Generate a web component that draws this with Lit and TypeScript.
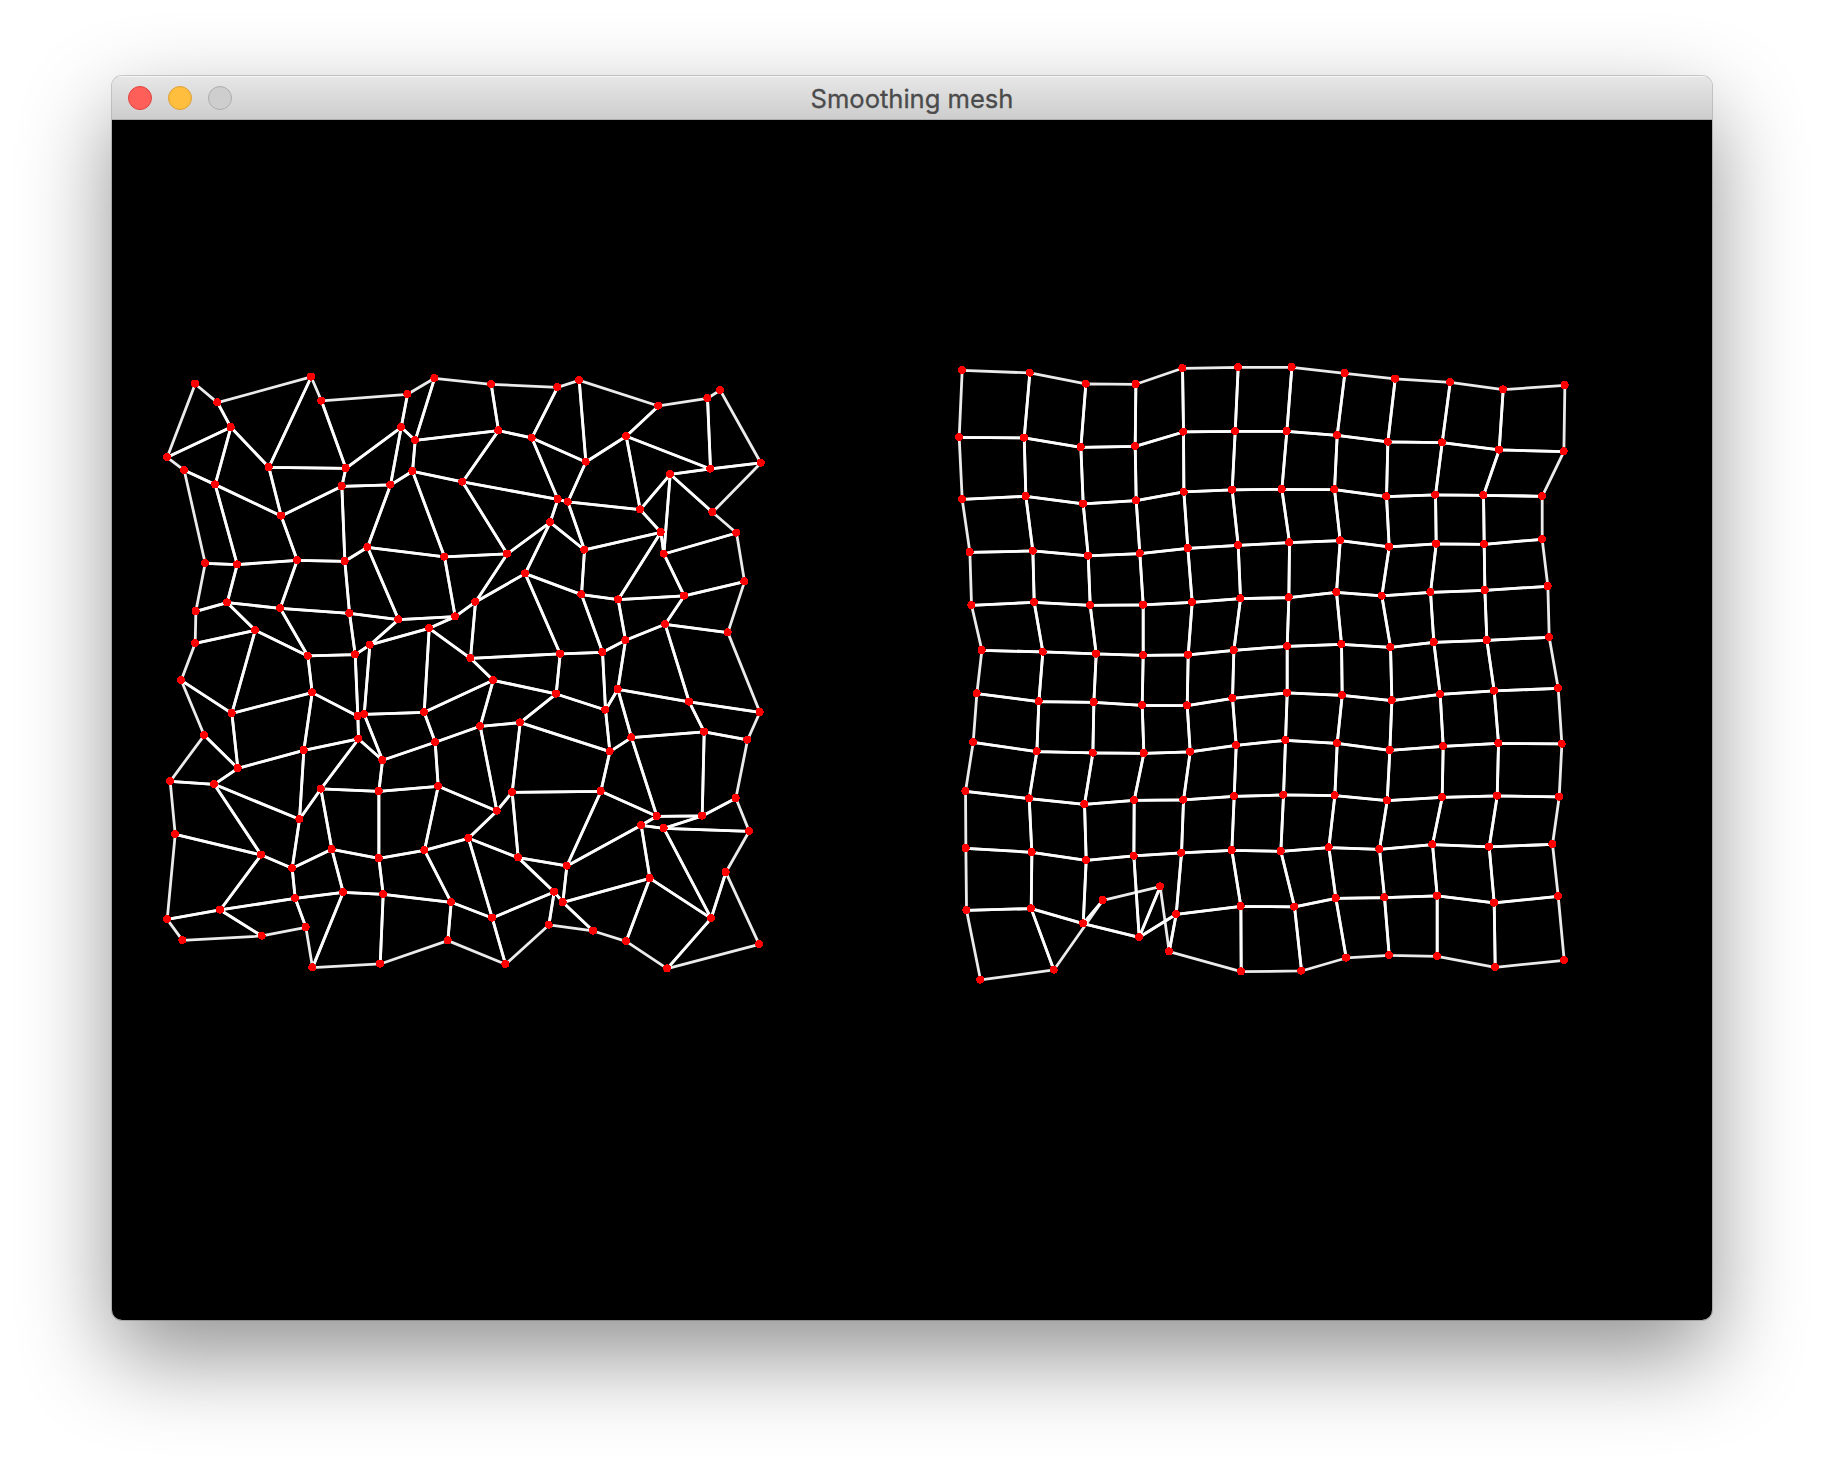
import { LitElement, html, svg, css } from "lit";
import { customElement, property } from "lit/decorators.js";

type Point = [number, number];

/** Vertex rows are stored per patch, in thirds of a pixel from the patch origin. */
interface Patch {
  origin: Point;
  rows: Point[][];
}

const UNIT = 3;
const CANVAS: Point = [112, 120];

const roughPatches: Patch[][] = [
  [
    {
      origin: [160, 370],
      rows: [
        [[105, 41], [172, 97], [453, 20], [484, 92], [742, 72], [823, 24]],
        [[21, 261], [212, 171], [326, 291], [557, 294], [723, 171], [765, 210]],
        [[72, 300], [165, 343], [363, 437], [545, 348], [691, 344], [757, 303]],
        [[135, 579], [231, 583], [411, 570], [554, 573], [622, 531], [853, 560]],
        [[107, 723], [201, 697], [360, 714], [568, 729], [715, 748], [885, 739]],
        [[105, 819], [285, 780], [443, 857], [585, 853], [629, 824], [807, 774]],
      ],
    },
    {
      origin: [460, 370],
      rows: [
        [[93, 42], [292, 51], [357, 30], [595, 107], [742, 84], [780, 60]],
        [[115, 181], [215, 203], [377, 275], [498, 198], [751, 296], [902, 278]],
        [[7, 335], [293, 387], [323, 395], [540, 418], [630, 312], [757, 426]],
        [[141, 551], [270, 456], [373, 539], [602, 486], [611, 551], [829, 488]],
        [[46, 695], [195, 610], [364, 673], [474, 688], [672, 677], [853, 634]],
        [[31, 864], [300, 851], [427, 846], [496, 810], [615, 762], [803, 787]],
      ],
    },
  ],
  [
    {
      origin: [160, 670],
      rows: [
        [[63, 30], [215, 129], [456, 67], [593, 138], [612, 132], [792, 126]],
        [[132, 195], [233, 294], [431, 240], [595, 206], [667, 270], [825, 216]],
        [[30, 333], [162, 342], [418, 447], [482, 356], [656, 363], [834, 348]],
        [[45, 492], [303, 554], [396, 594], [515, 537], [656, 564], [793, 540]],
        [[21, 747], [180, 719], [405, 684], [549, 666], [669, 672], [873, 696]],
        [[67, 810], [305, 797], [437, 771], [457, 892], [660, 881], [863, 811]],
      ],
    },
    {
      origin: [460, 670],
      rows: [
        [[99, 30], [288, 71], [436, 119], [473, 57], [687, 95], [899, 126]],
        [[60, 168], [180, 157], [449, 244], [514, 202], [732, 185], [862, 209]],
        [[110, 422], [156, 366], [422, 363], [590, 438], [726, 437], [827, 384]],
        [[25, 504], [174, 562], [320, 587], [543, 465], [611, 474], [867, 483]],
        [[96, 743], [282, 665], [308, 696], [569, 624], [753, 744], [797, 606]],
        [[136, 882], [266, 764], [399, 782], [498, 813], [621, 895], [897, 822]],
      ],
    },
  ],
];

const smoothPatches: Patch[][] = [
  [
    {
      origin: [950, 360],
      rows: [
        [[36, 30], [239, 38], [407, 71], [557, 72], [697, 24], [864, 21]],
        [[27, 231], [222, 233], [392, 261], [555, 258], [700, 215], [855, 213]],
        [[36, 417], [227, 408], [399, 431], [558, 421], [701, 395], [846, 389]],
        [[59, 576], [248, 572], [414, 587], [569, 580], [713, 564], [864, 555]],
        [[64, 735], [252, 726], [420, 735], [579, 734], [726, 726], [871, 715]],
        [[95, 870], [278, 875], [438, 881], [579, 885], [714, 884], [851, 870]],
      ],
    },
    {
      origin: [1260, 360],
      rows: [
        [[95, 21], [254, 39], [405, 56], [570, 66], [729, 88], [914, 75]],
        [[80, 213], [231, 225], [383, 245], [546, 247], [717, 269], [911, 274]],
        [[65, 387], [223, 388], [379, 409], [526, 404], [670, 405], [846, 408]],
        [[88, 547], [240, 541], [387, 560], [528, 551], [672, 552], [846, 537]],
        [[86, 712], [229, 696], [365, 707], [511, 696], [674, 690], [863, 678]],
        [[81, 858], [244, 852], [391, 861], [521, 846], [680, 840], [867, 831]],
      ],
    },
  ],
  [
    {
      origin: [950, 670],
      rows: [
        [[80, 70], [266, 94], [431, 96], [576, 105], [711, 106], [847, 84]],
        [[69, 216], [260, 244], [428, 248], [581, 249], [720, 245], [858, 225]],
        [[46, 363], [237, 385], [403, 402], [552, 390], [700, 389], [852, 378]],
        [[47, 534], [245, 546], [408, 570], [551, 557], [694, 548], [845, 540]],
        [[49, 720], [243, 715], [399, 760], [567, 801], [678, 732], [872, 708]],
        [[91, 929], [311, 899], [458, 690], [630, 649], [657, 844], [873, 904]],
      ],
    },
    {
      origin: [1260, 670],
      rows: [
        [[81, 68], [246, 75], [395, 91], [540, 72], [702, 62], [894, 54]],
        [[76, 210], [231, 219], [389, 240], [549, 228], [715, 219], [905, 221]],
        [[70, 374], [224, 376], [381, 391], [546, 381], [711, 377], [897, 380]],
        [[62, 543], [206, 532], [358, 537], [517, 523], [687, 530], [877, 522]],
        [[103, 710], [227, 684], [373, 682], [531, 677], [702, 698], [894, 678]],
        [[124, 902], [258, 863], [387, 855], [531, 858], [705, 891], [912, 870]],
      ],
    },
  ],
];

/** Joins the patches into one grid of vertices in canvas coordinates. */
function joinPatches(patches: Patch[][]): Point[][] {
  return patches.flatMap((band) =>
    band[0].rows.map((_, r) =>
      band.flatMap(({ origin, rows }) =>
        rows[r].map(([x, y]): Point => [
          origin[0] - CANVAS[0] + x / UNIT,
          origin[1] - CANVAS[1] + y / UNIT,
        ]),
      ),
    ),
  );
}

@customElement("mesh-view")
class MeshView extends LitElement {
  @property({ attribute: false }) meshes: Point[][][] = [];

  static styles = css`
    :host {
      display: block;
      height: 1200px;
      background: #000;
    }
    .canvas {
      display: block;
      width: 1600px;
      height: 1200px;
    }
    .cell {
      fill: none;
      stroke: #fff;
      stroke-width: 2.8;
      stroke-opacity: 0.92;
      stroke-linejoin: bevel;
    }
    .vertex {
      fill: #f00;
      shape-rendering: crispEdges;
    }
  `;

  /** Each quad is outlined on its own, so inner edges are stroked twice. */
  private cells(grid: Point[][]) {
    return grid.slice(1).flatMap((row, r) =>
      row.slice(1).map((corner, c) => {
        const quad = [grid[r][c], grid[r][c + 1], corner, row[c]];
        const points = quad
          .map(([x, y]) => `${(x + 0.2).toFixed(2)},${(y + 0.3).toFixed(2)}`)
          .join(" ");
        return svg`<polygon class="cell" points=${points}></polygon>`;
      }),
    );
  }

  private vertices(grid: Point[][]) {
    return grid.flat().map(
      ([x, y]) => svg`<circle class="vertex" cx=${x.toFixed(2)} cy=${y.toFixed(2)} r="4"></circle>`,
    );
  }

  render() {
    return html`<svg class="canvas" viewBox="0 0 1600 1200">
      ${this.meshes.map((grid) => svg`<g>${this.cells(grid)}${this.vertices(grid)}</g>`)}
    </svg>`;
  }
}

@customElement("app-root")
class AppRoot extends LitElement {
  static styles = css`
    :host {
      display: block;
      box-sizing: border-box;
      height: 1468px;
      padding: 76px 112px 148px;
      background: #fff;
      overflow: hidden;
    }
    .window {
      border-radius: 10px;
      box-shadow:
        0 0 0 1px rgba(0, 0, 0, 0.18),
        0 36px 90px rgba(0, 0, 0, 0.43);
    }
    .frame {
      border-radius: 10px;
      overflow: hidden;
    }
    .titlebar {
      box-sizing: border-box;
      height: 44px;
      display: grid;
      grid-template-columns: 1fr auto 1fr;
      align-items: center;
      padding: 0 16px;
      border-bottom: 1px solid #adadad;
      background: linear-gradient(#e7e7e7, #cdcdcd);
      box-shadow: inset 0 1px #f6f6f6;
    }
    .controls {
      display: flex;
      gap: 16px;
    }
    .control {
      box-sizing: border-box;
      width: 24px;
      height: 24px;
      border-radius: 50%;
      border: 1px solid;
    }
    .close {
      background: #ff5f59;
      border-color: #e0443f;
    }
    .minimize {
      background: #ffbe3e;
      border-color: #dba038;
    }
    .zoom {
      background: #cecece;
      border-color: #adadad;
    }
    .title {
      padding-top: 3px;
      font: 400 25.6px/32px Inter, "Liberation Sans", sans-serif;
      letter-spacing: -0.03px;
      -webkit-text-stroke: 0.3px #4b4b4b;
      color: #4b4b4b;
      white-space: nowrap;
    }
  `;

  private meshes = [joinPatches(roughPatches), joinPatches(smoothPatches)];

  render() {
    return html`
      <div class="window">
        <div class="frame">
          <div class="titlebar">
            <div class="controls">
              <span class="control close"></span>
              <span class="control minimize"></span>
              <span class="control zoom"></span>
            </div>
            <div class="title">Smoothing mesh</div>
          </div>
          <mesh-view .meshes=${this.meshes}></mesh-view>
        </div>
      </div>
    `;
  }
}
